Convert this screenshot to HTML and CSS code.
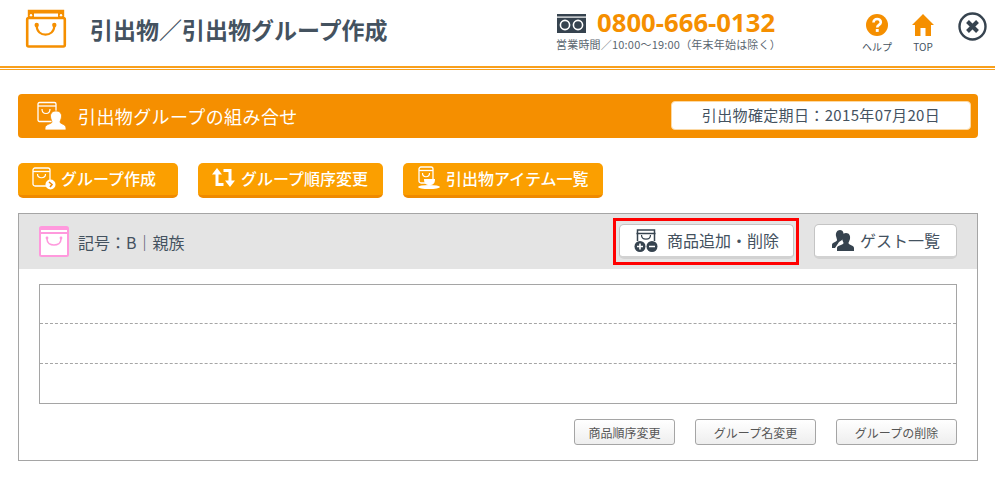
FILE: index.html
```html
<!DOCTYPE html>
<html lang="ja">
<head>
    <meta charset="UTF-8">
    <meta name="viewport" content="width=device-width, initial-scale=1.0">
    <title>引出物／引出物グループ作成</title>
    <link rel="stylesheet" href="styles.css">
</head>
<body>
    <!-- Header -->
    <header class="header">
        <svg class="logo" width="42" height="40" viewBox="0 0 42 40">
            <path d="M4 9 V2 H38 V9" fill="#fff" stroke="#f58f00" stroke-width="2.4"/>
            <path d="M4 2 H38 V4.5 H4 Z" fill="#f58f00"/>
            <path d="M3 4 H9 V9 H3 Z M33 4 H39 V9 H33 Z" fill="#f58f00"/>
            <circle cx="6" cy="6.3" r="1.2" fill="#fff"/>
            <circle cx="36" cy="6.3" r="1.2" fill="#fff"/>
            <rect x="2.2" y="9" width="37.6" height="28.5" rx="1.5" fill="#fff" stroke="#f58f00" stroke-width="2.6"/>
            <circle cx="11.7" cy="16" r="2.2" fill="#f58f00"/>
            <circle cx="29.3" cy="16" r="2.2" fill="#f58f00"/>
            <path d="M11.7 17 C11.7 28.5 29.3 28.5 29.3 17" fill="none" stroke="#f58f00" stroke-width="2.2"/>
        </svg>
        <h1 class="page-title">引出物／引出物グループ作成</h1>
        <div class="contact">
            <div class="phone">
                <svg class="dial-icon" width="29" height="19" viewBox="0 0 29 19">
                    <rect width="29" height="19" fill="#36434f"/>
                    <rect y="2.5" width="29" height="1.2" fill="#fff"/>
                    <circle cx="8" cy="11" r="4.6" fill="none" stroke="#fff" stroke-width="1.6"/>
                    <circle cx="21" cy="11" r="4.6" fill="none" stroke="#fff" stroke-width="1.6"/>
                </svg>
                <span class="phone-number">0800-666-0132</span>
            </div>
            <p class="hours">営業時間／10:00～19:00（年末年始は除く）</p>
        </div>
        <nav class="header-nav">
            <a class="nav-item">
                <svg width="22" height="22" viewBox="0 0 22 22">
                    <circle cx="11" cy="11" r="11" fill="#f58f00"/>
                    <path d="M7.5 8.5 C7.5 3.8 14.8 4 14.8 8.3 C14.8 11 11.2 10.8 11.2 13.6" fill="none" stroke="#fff" stroke-width="2.6"/>
                    <rect x="9.8" y="15" width="2.9" height="2.9" fill="#fff"/>
                </svg>
                <span>ヘルプ</span>
            </a>
            <a class="nav-item nav-top">
                <svg width="22" height="22" viewBox="0 0 22 22">
                    <path d="M11 0 L22 11 L19 11 L19 22 L13.5 22 L13.5 14 L8.5 14 L8.5 22 L3 22 L3 11 L0 11 Z" fill="#f58f00"/>
                </svg>
                <span>TOP</span>
            </a>
            <svg class="close-icon" width="29" height="29" viewBox="0 0 29 29">
                <circle cx="14.5" cy="14.5" r="13" fill="#fff" stroke="#36434f" stroke-width="2.4"/>
                <path d="M9.5 9.5 L19.5 19.5 M19.5 9.5 L9.5 19.5" stroke="#36434f" stroke-width="4"/>
            </svg>
        </nav>
    </header>
    <div class="header-line"></div>

    <main class="content">
        <!-- Title bar -->
        <div class="title-bar">
            <div class="title-left">
                <svg width="30" height="30" viewBox="0 0 30 30">
                    <rect x="1" y="1.5" width="18" height="19" rx="1.5" fill="none" stroke="#fff" stroke-width="1.3"/>
                    <path d="M1 5 H19" stroke="#fff" stroke-width="1.3"/>
                    <path d="M5 8 C5 14 13 14 13 8" fill="none" stroke="#fff" stroke-width="1.2"/>
                    <path d="M19 10 C23 10 25 13 24.5 16 C24 19 23 20 23 21 C23 23 29 23 29 27 L29 29 L8 29 L8 27 C8 23 15 23 15 21 C15 20 14 19 13.5 16 C13 13 15 10 19 10 Z" fill="#fff" stroke="#f58f00" stroke-width="0.8"/>
                </svg>
                <h2 class="bar-title">引出物グループの組み合せ</h2>
            </div>
            <div class="deadline">引出物確定期日：2015年07月20日</div>
        </div>

        <!-- Action buttons -->
        <div class="actions">
            <a class="btn-orange btn-create">
                <svg width="24" height="24" viewBox="0 0 24 24">
                    <rect x="1" y="2" width="17" height="18" rx="2" fill="none" stroke="#fff" stroke-width="1.3"/>
                    <path d="M1 5.5 H18" stroke="#fff" stroke-width="1.3"/>
                    <path d="M5.5 8 C5.5 13 13.5 13 13.5 8" fill="none" stroke="#fff" stroke-width="1.2"/>
                    <circle cx="18.5" cy="18.5" r="5" fill="#fff"/>
                    <path d="M17 16 L20 18.5 L18 21" fill="none" stroke="#ef8a00" stroke-width="1.6"/>
                </svg>
                <span>グループ作成</span>
            </a>
            <a class="btn-orange btn-order">
                <svg width="23" height="19" viewBox="0 0 23 19">
                    <path d="M5 5 V16.5 H11.5 M11.5 2.5 H18 V14" fill="none" stroke="#fff" stroke-width="3"/>
                    <path d="M0 6.5 L5 0 L10 6.5 Z M13 12.5 L18 19 L23 12.5 Z" fill="#fff"/>
                </svg>
                <span>グループ順序変更</span>
            </a>
            <a class="btn-orange btn-items">
                <svg width="24" height="24" viewBox="0 0 24 24">
                    <rect x="2" y="1" width="14" height="16" rx="2" fill="none" stroke="#fff" stroke-width="1.3"/>
                    <path d="M2 4.5 H16" stroke="#fff" stroke-width="1.3"/>
                    <path d="M5.5 7 C5.5 12 12.5 12 12.5 7" fill="none" stroke="#fff" stroke-width="1.2"/>
                    <path d="M7 13 H18 C18 17 16.5 19 12.5 19 C8.5 19 7 17 7 13 Z" fill="#fff"/>
                    <ellipse cx="12" cy="21" rx="11" ry="2" fill="#fff"/>
                </svg>
                <span>引出物アイテム一覧</span>
            </a>
        </div>

        <!-- Group panel -->
        <section class="panel">
            <div class="panel-head">
                <div class="group-label">
                    <svg class="group-icon" width="30" height="31" viewBox="0 0 30 31">
                        <rect x="1" y="1" width="28" height="29" rx="1.5" fill="#fff" stroke="#ff99dd" stroke-width="2"/>
                        <path d="M1 7 H29" stroke="#ff99dd" stroke-width="2"/>
                        <rect x="1" y="1" width="28" height="3" fill="#ff99dd"/>
                        <circle cx="8" cy="12" r="1.4" fill="#ff99dd"/>
                        <circle cx="22" cy="12" r="1.4" fill="#ff99dd"/>
                        <path d="M8 13 C8 21 22 21 22 13" fill="none" stroke="#ff99dd" stroke-width="1.6"/>
                    </svg>
                    <span class="group-name">記号：B｜親族</span>
                </div>
                <div class="panel-actions">
                    <div class="highlight">
                        <a class="btn-white btn-goods">
                            <svg width="24" height="25" viewBox="0 0 24 25">
                                <path d="M3.5 13 V2 H20.5 V13" fill="none" stroke="#36434f" stroke-width="1.5"/>
                                <path d="M2.5 5.5 H21.5" stroke="#36434f" stroke-width="1.5"/>
                                <path d="M7.5 7 C7.5 12.5 16.5 12.5 16.5 7" fill="none" stroke="#36434f" stroke-width="1.2"/>
                                <circle cx="6" cy="18.5" r="5.5" fill="#36434f"/>
                                <circle cx="18" cy="18.5" r="5.5" fill="#36434f"/>
                                <path d="M3 18.5 H9 M6 15.5 V21.5 M15 18.5 H21" stroke="#fff" stroke-width="1.6"/>
                            </svg>
                            <span>商品追加・削除</span>
                        </a>
                    </div>
                    <a class="btn-white btn-guest">
                        <svg width="22" height="22" viewBox="0 0 22 22">
                            <path d="M8 1 C11 1 12 4 11.5 7 C11 9 10 10 10 11 L7 13 L3 19 L0 19 L0 16 C0 13 5 13 5 11 C5 10 4.5 9 4 7 C3.5 4 5 1 8 1 Z" fill="#36434f"/>
                            <path d="M14 4 C17.5 4 18.5 7 18 10 C17.5 12 16.5 13 16.5 14 C16.5 16 22 16 22 19 L22 22 L5 22 L5 19 C5 16 11.5 16 11.5 14 C11.5 13 10.5 12 10 10 C9.5 7 10.5 4 14 4 Z" fill="#36434f"/>
                        </svg>
                        <span>ゲスト一覧</span>
                    </a>
                </div>
            </div>
            <div class="panel-body">
                <div class="goods-table">
                    <div class="goods-row"></div>
                    <div class="goods-row"></div>
                    <div class="goods-row"></div>
                </div>
                <div class="panel-foot">
                    <a class="btn-small btn-s1">商品順序変更</a>
                    <a class="btn-small btn-s2">グループ名変更</a>
                    <a class="btn-small btn-s2">グループの削除</a>
                </div>
            </div>
        </section>
    </main>
</body>
</html>
```

FILE: styles.css
```css
* {
    box-sizing: border-box;
}
body {
    margin: 0;
    background-color: #fff;
    color: #44525f;
    font-family: "Noto Sans CJK JP", "Noto Sans", sans-serif;
}
.header {
    height: 66px;
    display: flex;
    align-items: flex-start;
}
.logo {
    margin: 9px 0 0 25px;
}
.page-title {
    margin: 12px 0 0 23px;
    width: 466px;
    font-size: 23px;
    line-height: 34px;
    font-weight: 700;
    color: #44525f;
}
.contact {
    width: 299px;
    margin-top: 10px;
}
.phone {
    display: flex;
    align-items: center;
    gap: 11px;
    height: 26px;
    margin-left: 1px;
}
.phone-number {
    font-family: "Open Sans", sans-serif;
    font-size: 25.7px;
    line-height: 26px;
    font-weight: 700;
    color: #f58f00;
}
.hours {
    margin: 0;
    font-size: 11px;
    line-height: 16px;
    letter-spacing: 0.2px;
    color: #5a6670;
    white-space: nowrap;
}
.header-nav {
    display: flex;
    align-items: flex-start;
}
.nav-item {
    width: 44px;
    margin-top: 14px;
    display: flex;
    flex-direction: column;
    align-items: center;
    font-size: 10px;
    line-height: 14px;
    gap: 4px;
}
.nav-top {
    margin-left: 2px;
}
.close-icon {
    margin: 12px 0 0 13px;
}
.header-line {
    height: 4px;
    border-top: 2px solid #f8a01c;
    border-bottom: 1px solid #f8a01c;
}
.content {
    padding: 24px 17px 0 18px;
}
.title-bar {
    height: 44px;
    display: flex;
    align-items: center;
    justify-content: space-between;
    padding: 0 7px 1px 19px;
    background-color: #f58f00;
    border-radius: 4px;
}
.title-left {
    display: flex;
    align-items: center;
    gap: 11px;
}
.bar-title {
    margin: 0;
    font-size: 18px;
    letter-spacing: 0.4px;
    font-weight: 400;
    color: #fff;
}
.deadline {
    width: 300px;
    height: 29px;
    background-color: #fff;
    border: 1px solid #fcd9a4;
    border-radius: 4px;
    text-align: center;
    font-size: 15px;
    letter-spacing: 0.35px;
    line-height: 25px;
    color: #44525f;
}
.actions {
    display: flex;
    gap: 20px;
    margin-top: 25px;
}
.btn-orange {
    height: 35px;
    display: flex;
    align-items: center;
    gap: 5px;
    padding: 0 0 3px 14px;
    background-color: #fb9f00;
    border-bottom: 3px solid #ef8a00;
    border-radius: 5px;
    color: #fff;
    font-size: 16px;
    font-weight: 500;
}
.btn-create {
    width: 160px;
}
.btn-order {
    width: 185px;
    gap: 6px;
}
.btn-items {
    width: 200px;
}
.panel {
    height: 248px;
    margin-top: 15px;
    border: 1px solid #a5a5a5;
}
.panel-head {
    height: 55px;
    display: flex;
    justify-content: space-between;
    padding: 4px 20px 0 20px;
    background-color: #e4e4e4;
}
.group-label {
    display: flex;
    align-items: center;
    gap: 9px;
    padding: 9px 0 8px;
    height: 47px;
}
.group-icon {
    margin-top: -2px;
}
.group-name {
    font-size: 16px;
}
.panel-actions {
    display: flex;
    gap: 15px;
}
.highlight {
    width: 186px;
    height: 47px;
    padding: 3px 2px 3px 3px;
    border: 3px solid #f00;
}
.btn-white {
    height: 35px;
    display: flex;
    align-items: center;
    padding-bottom: 1px;
    background-color: #fff;
    border: 1px solid #c4c4c4;
    border-bottom: 3px solid #d2d2d2;
    border-radius: 5px;
    font-size: 16px;
}
.btn-goods {
    width: 175px;
    padding-left: 14px;
    gap: 9px;
}
.btn-guest {
    width: 143px;
    margin-top: 6px;
    padding-left: 17px;
    gap: 6px;
}
.panel-body {
    padding: 15px 20px 0;
}
.goods-table {
    height: 120px;
    border: 1px solid #a5a5a5;
}
.goods-row {
    height: 39px;
    border-bottom: 1px dashed #a5a5a5;
}
.goods-row:nth-child(2) {
    height: 40px;
}
.goods-row:last-child {
    border-bottom: none;
}
.panel-foot {
    display: flex;
    justify-content: flex-end;
    gap: 20px;
    margin-top: 15px;
}
.btn-small {
    height: 26px;
    display: flex;
    align-items: center;
    justify-content: center;
    background: linear-gradient(#fff, #eeeeee);
    border: 1px solid #a5a5a5;
    border-radius: 3px;
    font-size: 12px;
    color: #555;
}
.btn-s1 {
    width: 101px;
}
.btn-s2 {
    width: 121px;
}
```
